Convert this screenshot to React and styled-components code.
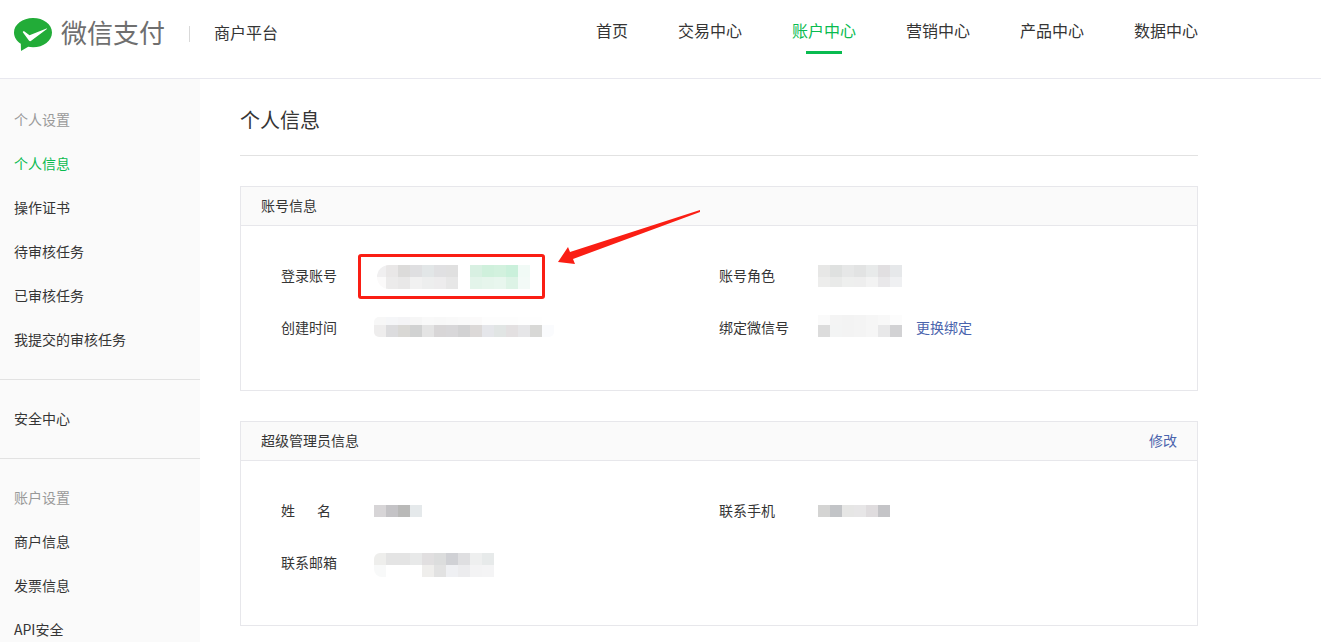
import React from "react";
import styled, { createGlobalStyle } from "styled-components";

const GlobalStyle = createGlobalStyle`
  html, body {
    margin: 0;
    padding: 0;
    height: 642px;
    overflow: hidden;
    background: #fff;
    font-family: "Noto Sans CJK SC", "Liberation Sans", sans-serif;
    color: #353535;
  }
`;

const Page = styled.div`
  width: 1321px;
  height: 642px;
  position: relative;
  overflow: hidden;
`;

// Header

const Header = styled.header`
  height: 78px;
  display: flex;
  align-items: flex-start;
  padding-left: 14px;
  padding-right: 123px;
  border-bottom: 1px solid #e8e8ef;
`;

const Logo = styled.div`
  display: flex;
  align-items: center;
  height: 68px;
`;

const LogoName = styled.span`
  margin: 0 0 4px 9px;
  font-size: 26px;
  line-height: 1;
  color: #6f6f6f;
`;

const LogoSplit = styled.span`
  width: 1px;
  height: 16px;
  margin: 0 24px;
  background: #d9d9d9;
`;

const LogoSub = styled.span`
  margin-bottom: 4px;
  font-size: 16px;
  color: #353535;
`;

const Nav = styled.nav`
  margin-left: auto;
  display: flex;
  gap: 50px;
`;

const NavItem = styled.a`
  height: 54px;
  box-sizing: border-box;
  padding-top: 18px;
  font-size: 16px;
  line-height: 24px;
  color: ${(p) => (p.$active ? "#09bb50" : "#353535")};
  position: relative;

  ${(p) =>
    p.$active &&
    `&::after {
      content: "";
      position: absolute;
      left: 14px;
      right: 14px;
      bottom: 0;
      height: 3px;
      background: #09bb50;
    }`}
`;

// Body

const Body = styled.div`
  display: flex;
  height: 563px;
`;

const Sidebar = styled.aside`
  width: 200px;
  flex: none;
  padding-top: 18px;
  background: #fafafa;
`;

const SideGroup = styled.div`
  padding-bottom: 18px;
  margin-bottom: 16px;
  border-bottom: ${(p) => (p.$last ? "none" : "1px solid #e2e2e2")};
`;

const SideItem = styled.div`
  height: 44px;
  padding-left: 14px;
  font-size: 14px;
  line-height: 44px;
  color: ${(p) => (p.$muted ? "#999" : p.$active ? "#09bb50" : "#353535")};
`;

const Main = styled.main`
  width: 958px;
  margin-left: 40px;
`;

const PageTitle = styled.h1`
  margin: 0;
  height: 77px;
  box-sizing: border-box;
  padding-top: 25px;
  font-size: 20px;
  font-weight: 400;
  line-height: 32px;
  color: #353535;
  border-bottom: 1px solid #e2e2e2;
`;

const Panel = styled.section`
  margin-top: 30px;
  height: 205px;
  box-sizing: border-box;
  border: 1px solid #e7e7eb;
`;

const PanelHead = styled.div`
  height: 36px;
  box-sizing: content-box;
  padding: 0 20px 2px;
  display: flex;
  justify-content: space-between;
  align-items: center;
  background: #fafafa;
  border-bottom: 1px solid #e7e7eb;
  font-size: 14px;
  color: #353535;
`;

const Link = styled.a`
  margin-left: ${(p) => p.$left || 0}px;
  font-size: 14px;
  color: #4a64ad;
`;

const Fields = styled.div`
  display: grid;
  grid-template-columns: 438px 1fr;
  grid-auto-rows: 52px;
  padding: 23px 0 0 40px;
`;

const Field = styled.div`
  display: flex;
  align-items: center;
  height: 52px;
`;

const FieldLabel = styled.span`
  width: ${(p) => p.$w}px;
  flex: none;
  font-size: 14px;
  color: #353535;
  white-space: pre;
`;

const Blur = styled.div`
  display: inline-grid;
  grid-auto-flow: column;
  grid-template-rows: ${(p) => p.$rows};
  grid-template-columns: ${(p) => p.$first || 12}px;
  grid-auto-columns: 12px;
  flex: none;
  margin-top: ${(p) => p.$drop || 0}px;
  margin-right: ${(p) => p.$gap || 0}px;
  border-radius: ${(p) => p.$round || 0};
  overflow: hidden;
`;

// Annotation laid over the screenshot

const RedBox = styled.div`
  position: absolute;
  left: 358px;
  top: 254px;
  width: 181px;
  height: 39px;
  border: 3px solid #fa1e14;
  border-radius: 3px;
`;

const Arrow = styled.svg`
  position: absolute;
  left: 550px;
  top: 204px;
`;

// Mosaic cells are listed by column, top to bottom
const Mosaic = ({ rows, colors, gap, round, drop, first }) => (
  <Blur $rows={rows} $gap={gap} $round={round} $drop={drop} $first={first}>
    {colors.map((c, i) => (
      <div key={i} style={{ background: c }} />
    ))}
  </Blur>
);

const navItems = ["首页", "交易中心", "账户中心", "营销中心", "产品中心", "数据中心"];

const LoginMosaics = () => (
  <>
    <Mosaic
      rows="12px 12px"
      gap={12}
      first={9}
      drop={4}
      round="12px 0 0 12px"
      colors={[
        "#f0eff0", "#fbfafa", "#e9e7e7", "#ecebeb", "#dcdbda", "#e9e8e8", "#dfdfe1", "#f1f1f1",
        "#e2e6e7", "#edeeee", "#e0e0e2", "#edeced", "#e0e0e0", "#e7e7e7",
      ]}
    />
    <Mosaic
      rows="12px 12px"
      drop={4}
      colors={[
        "#d8f0e2", "#e3f4ea", "#cff0dc", "#e6f5ec", "#d2f1de", "#e8f6ee", "#caf0db", "#ddf3e6",
        "#f1faf6", "#f3faf7",
      ]}
    />
  </>
);

const CreatedMosaic = () => (
  <Mosaic
    rows="8px 12px"
    round="5px"
    colors={[
      "#f7f7f7", "#eeeded", "#f5f6f8", "#dcdcde", "#f4f4f6", "#d9d8d5", "#f6f6f6", "#d1d2d2",
      "#f9f9f9", "#e4e4e4", "#f8f8f8", "#d8d6d7", "#f9f9f9", "#d8d7d9", "#fafafa", "#d2d2d3",
      "#fbfafa", "#dcd9d8", "#fdfdfd", "#e5e6ea", "#fdfdfd", "#e1e5e4", "#fdfdfd", "#e3e0e1",
      "#fefefe", "#e6e6e8", "#fefefe", "#d8d8d6", "#ffffff", "#fafbfd",
    ]}
  />
);

const RoleMosaic = () => (
  <Mosaic
    rows="12px 10px"
    drop={2}
    colors={[
      "#e7e7e6", "#ededec", "#dfe1e0", "#e9eae9", "#e6e7e7", "#eeefee", "#e2e3e3", "#eeeeee",
      "#e8eaea", "#f3f3f3", "#e1dfe1", "#e9e8ea", "#e6e8ea", "#eff0f2",
    ]}
  />
);

const WechatMosaic = () => (
  <Mosaic
    rows="10px 12px"
    drop={-2}
    colors={[
      "#fafafa", "#dcdcdc", "#f4f4f4", "#f3f4f4", "#f3f3f3", "#f3f3f3", "#f4f4f4", "#f4f4f4",
      "#f6f6f6", "#f6f6f6", "#f8f8f8", "#e8e8e9", "#fcfcfc", "#d2d2d4",
    ]}
  />
);

const NameMosaic = () => (
  <Mosaic rows="12px" drop={2} colors={["#d7d5d7", "#c4c3c6", "#b9b9b8", "#e5e9eb"]} />
);

const PhoneMosaic = () => (
  <Mosaic
    rows="12px"
    drop={2}
    colors={["#d4d4d3", "#c2c4c7", "#e6e6e5", "#e7e6e7", "#dfdcde", "#c4c4c7"]}
  />
);

const EmailMosaic = () => (
  <Mosaic
    rows="12px 12px"
    drop={6}
    round="6px 0 0 8px"
    colors={[
      "#eeeeec", "#f8f9f9", "#e4e4e4", "#ffffff", "#e4e4e4", "#ffffff", "#e8e9e9", "#ffffff",
      "#e1dfe0", "#efeeec", "#dcdddd", "#e2e2e2", "#d0d1d5", "#eff0f3", "#dfdfe1", "#ececee",
      "#eeefef", "#f3f3f4", "#e7eaea", "#f4f4f5",
    ]}
  />
);

const WechatLogo = () => (
  <svg width="38" height="35" viewBox="0 0 38 35">
    <path
      d="M19 1C8.5 1 0 7.5 0 15.5c0 4.6 2.6 8.6 6.8 11.3L7 34l7.2-4.2c1.5.3 3.1.5 4.8.5 10.5 0 19-6.6 19-14.8S29.5 1 19 1z"
      fill="#22ac38"
    />
    <path
      d="M9 14.5c.5-.5 1-.4 1.5 0l5 3.8L32.5 11.5c.6-.2.8.2.4.6L17.5 23.6c-1 .8-2 .7-2.8-.3L9 15.5c-.3-.4-.2-.7 0-1z"
      fill="#fff"
    />
  </svg>
);

const App = () => (
  <Page>
    <GlobalStyle />
    <Header>
      <Logo>
        <WechatLogo />
        <LogoName>微信支付</LogoName>
        <LogoSplit />
        <LogoSub>商户平台</LogoSub>
      </Logo>
      <Nav>
        {navItems.map((item) => (
          <NavItem key={item} $active={item === "账户中心"}>
            {item}
          </NavItem>
        ))}
      </Nav>
    </Header>
    <Body>
      <Sidebar>
        <SideGroup>
          <SideItem $muted>个人设置</SideItem>
          <SideItem $active>个人信息</SideItem>
          <SideItem>操作证书</SideItem>
          <SideItem>待审核任务</SideItem>
          <SideItem>已审核任务</SideItem>
          <SideItem>我提交的审核任务</SideItem>
        </SideGroup>
        <SideGroup>
          <SideItem>安全中心</SideItem>
        </SideGroup>
        <SideGroup $last>
          <SideItem $muted>账户设置</SideItem>
          <SideItem>商户信息</SideItem>
          <SideItem>发票信息</SideItem>
          <SideItem>API安全</SideItem>
        </SideGroup>
      </Sidebar>
      <Main>
        <PageTitle>个人信息</PageTitle>
        <Panel>
          <PanelHead>账号信息</PanelHead>
          <Fields>
            <Field>
              <FieldLabel $w={96}>登录账号</FieldLabel>
              <LoginMosaics />
            </Field>
            <Field>
              <FieldLabel $w={99}>账号角色</FieldLabel>
              <RoleMosaic />
            </Field>
            <Field>
              <FieldLabel $w={93}>创建时间</FieldLabel>
              <CreatedMosaic />
            </Field>
            <Field>
              <FieldLabel $w={99}>绑定微信号</FieldLabel>
              <WechatMosaic />
              <Link $left={14}>更换绑定</Link>
            </Field>
          </Fields>
        </Panel>
        <Panel>
          <PanelHead>
            超级管理员信息
            <Link>修改</Link>
          </PanelHead>
          <Fields>
            <Field>
              <FieldLabel $w={93}>{"姓       名"}</FieldLabel>
              <NameMosaic />
            </Field>
            <Field>
              <FieldLabel $w={99}>联系手机</FieldLabel>
              <PhoneMosaic />
            </Field>
            <Field>
              <FieldLabel $w={93}>联系邮箱</FieldLabel>
              <EmailMosaic />
            </Field>
          </Fields>
        </Panel>
      </Main>
    </Body>
    <RedBox />
    <Arrow width="152" height="62" viewBox="0 0 152 62">
      <path d="M150 6 L20 48 L18 43 L8 58 L25 60 L23 55 L150 8 Z" fill="#fa1e14" />
    </Arrow>
  </Page>
);

export default App;
